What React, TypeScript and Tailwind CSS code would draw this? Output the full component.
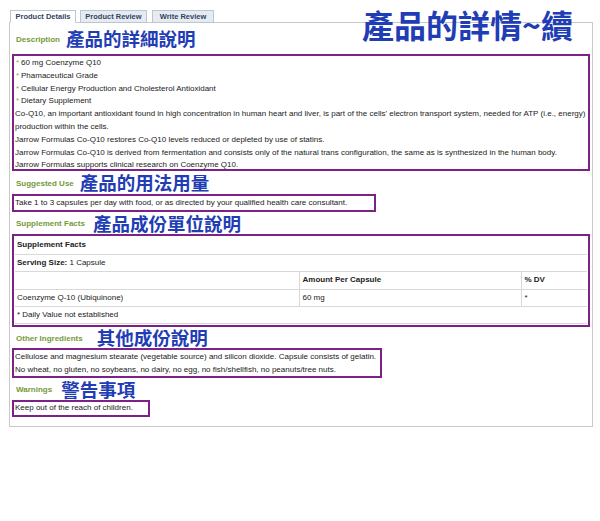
import type React from "react"

const cjk = { fontFamily: '"Noto Sans CJK TC", "Noto Sans CJK SC", sans-serif' }

const bullets = [
  "60 mg Coenzyme Q10",
  "Phamaceutical Grade",
  "Cellular Energy Production and Cholesterol Antioxidant",
  "Dietary Supplement",
]

const paragraphs = [
  "Co-Q10, an important antioxidant found in high concentration in human heart and liver, is part of the cells' electron transport system, needed for ATP (i.e., energy) production within the cells.",
  "Jarrow Formulas Co-Q10 restores Co-Q10 levels reduced or depleted by use of statins.",
  "Jarrow Formulas Co-Q10 is derived from fermentation and consists only of the natural trans configuration, the same as is synthesized in the human body.",
  "Jarrow Formulas supports clinical research on Coenzyme Q10.",
]

function Heading({
  label,
  title,
  gap,
  height,
}: {
  label: string
  title: string
  gap: string
  height: string
}) {
  return (
    <div className={`flex items-center pl-[4px] ${height}`}>
      <span className="text-[8px] font-bold text-[#76993a] pt-[2px]">{label}</span>
      <span
        className={`text-[18.5px] leading-none font-bold text-[#1f3db4] ${gap}`}
        style={cjk}
      >
        {title}
      </span>
    </div>
  )
}

function Tab({ label, width, active }: { label: string; width: string; active?: boolean }) {
  return (
    <div
      className={`${width} h-[13px] border border-[#bcc6d3] text-[7.5px] leading-[11px] font-bold text-[#33435e] whitespace-nowrap text-center ${
        active ? "bg-white border-b-white relative z-10" : "bg-[#e6ebf2]"
      }`}
    >
      {label}
    </div>
  )
}

export default function App() {
  return (
    <div
      className="relative w-[600px] h-[521px] bg-white pt-[10px] pl-[9px]"
      style={{ fontFamily: '"Liberation Sans", Arial, sans-serif' }}
    >
      <div
        className="absolute left-[362px] top-[4px] text-[32px] leading-[40px] font-bold text-[#1f3db4] z-20"
        style={cjk}
      >
        產品的詳情~續
      </div>

      <div className="flex pl-[1px] -mb-[1px]">
        <Tab label="Product Details" width="w-[66px]" active />
        <div className="ml-[4px]">
          <Tab label="Product Review" width="w-[67px]" />
        </div>
        <div className="ml-[5px]">
          <Tab label="Write Review" width="w-[62px]" />
        </div>
      </div>

      <div className="w-[584px] h-[405px] border border-[#c9c9c9] pl-[2px] text-[8px] text-[#222]">
        <Heading label="Description" title="產品的詳細說明" gap="ml-[6px]" height="h-[31px]" />
        <div className="w-[578px] h-[117px] border-2 border-[#7d2188] px-[1px] pt-[1px] leading-[12.8px]">
          {bullets.map((b) => (
            <div key={b} className="flex">
              <span className="text-[#8cae3e] w-[6px] pl-[1px]">*</span>
              <span>{b}</span>
            </div>
          ))}
          {paragraphs.map((p) => (
            <div key={p}>{p}</div>
          ))}
        </div>

        <Heading label="Suggested Use" title="產品的用法用量" gap="ml-[6px]" height="h-[23px]" />
        <div className="w-[364px] h-[18px] border-2 border-[#7d2188] px-[1px] leading-[13px]">
          Take 1 to 3 capsules per day with food, or as directed by your qualified health care consultant.
        </div>

        <Heading label="Supplement Facts" title="產品成份單位說明" gap="ml-[8px]" height="h-[22px]" />
        <div className="w-[578px] h-[93px] border-2 border-[#7d2188] px-[1px] pt-[1px]">
          <table className="w-full border-collapse">
            <tbody>
              <tr className="h-[17px] border-b border-[#d8d8d8]">
                <td colSpan={3} className="px-[2px] font-bold">
                  Supplement Facts
                </td>
              </tr>
              <tr className="h-[17px] border-b border-[#d8d8d8]">
                <td colSpan={3} className="px-[2px]">
                  <span className="font-bold">Serving Size:</span> 1 Capsule
                </td>
              </tr>
              <tr className="h-[18px] border-b border-[#d8d8d8]">
                <td className="w-[284px] px-[2px] border-r border-[#d8d8d8]"></td>
                <td className="w-[222px] px-[3px] font-bold border-r border-[#d8d8d8]">Amount Per Capsule</td>
                <td className="px-[3px] font-bold">% DV</td>
              </tr>
              <tr className="h-[17px] border-b border-[#d8d8d8]">
                <td className="px-[2px] border-r border-[#d8d8d8]">Coenzyme Q-10 (Ubiquinone)</td>
                <td className="px-[3px] border-r border-[#d8d8d8]">60 mg</td>
                <td className="px-[3px]">*</td>
              </tr>
              <tr className="h-[17px] border-b border-[#d8d8d8]">
                <td colSpan={3} className="px-[2px]">
                  * Daily Value not established
                </td>
              </tr>
            </tbody>
          </table>
        </div>

        <Heading label="Other Ingredients" title="其他成份說明" gap="ml-[14px]" height="h-[21px]" />
        <div className="w-[370px] h-[30px] border-2 border-[#7d2188] px-[1px] leading-[13px]">
          <div>Cellulose and magnesium stearate (vegetable source) and silicon dioxide. Capsule consists of gelatin.</div>
          <div>No wheat, no gluten, no soybeans, no dairy, no egg, no fish/shellfish, no peanuts/tree nuts.</div>
        </div>

        <Heading label="Warnings" title="警告事項" gap="ml-[9px]" height="h-[22px]" />
        <div className="w-[138px] h-[17px] border-2 border-[#7d2188] px-[1px] leading-[11px]">
          Keep out of the reach of children.
        </div>
      </div>
    </div>
  )
}
